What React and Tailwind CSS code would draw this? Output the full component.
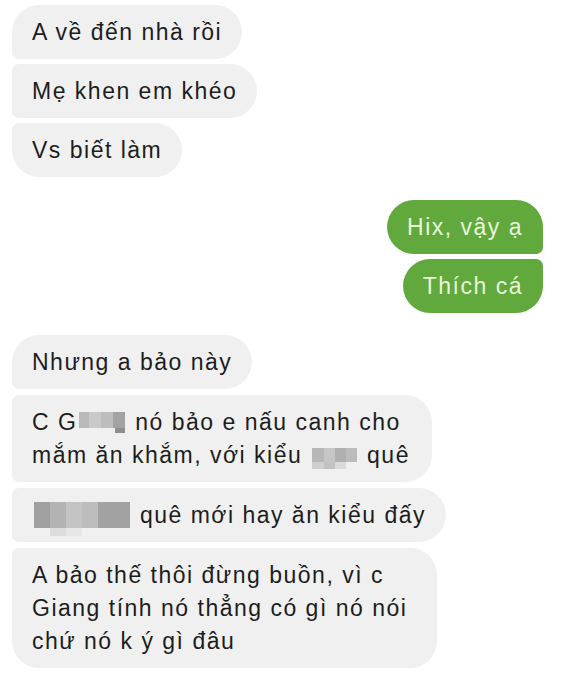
const font = { fontFamily: '"Liberation Sans", Arial, sans-serif' };

// pixelated censor block; each row: [height, [[width, colour], ...]]
function Blur({ rows, shift = 0 }) {
    return (
        <span className="inline-flex flex-col align-middle my-[-12px] mx-[2px]" style={{ position: 'relative', top: shift }}>
            {rows.map(([h, cells], i) => (
                <span key={i} className="flex">
                    {cells.map(([w, c], j) => (
                        <span key={j} className="inline-block" style={{ width: w, height: h, background: c }} />
                    ))}
                </span>
            ))}
        </span>
    );
}

function Left({ children, pos, className = 'pr-5' }) {
    const corners = {
        first: 'rounded-[27px] rounded-bl-[7px]',
        middle: 'rounded-[27px] rounded-tl-[7px] rounded-bl-[7px]',
        last: 'rounded-[27px] rounded-tl-[7px]',
    }[pos];
    return (
        <div className={`self-start bg-[#f0f0f0] text-[#1d1d1d] pl-5 py-[10.5px] whitespace-nowrap ${corners} ${className}`}>
            {children}
        </div>
    );
}

function Right({ children, pos }) {
    const corners = pos === 'first'
        ? 'rounded-[27px] rounded-br-[7px]'
        : 'rounded-[27px] rounded-tr-[7px]';
    return (
        <div className={`self-end mr-[20px] bg-[#61a83d] text-[#e8f6da] px-5 py-[10.5px] whitespace-nowrap ${corners}`}>
            {children}
        </div>
    );
}

export default function App() {
    return (
        <div className="w-[563px] h-[678px] bg-white overflow-hidden pl-3 pt-[5px] text-[23px] leading-[33px] tracking-[1.5px]" style={font}>
            <div className="flex flex-col gap-[5px]">
                <Left pos="first">A về đến nhà rồi</Left>
                <Left pos="middle">Mẹ khen em khéo</Left>
                <Left pos="last">Vs biết làm</Left>
            </div>

            <div className="flex flex-col gap-[5px] mt-[23px]">
                <Right pos="first">Hix, vậy ạ</Right>
                <Right pos="last">Thích cá</Right>
            </div>

            <div className="flex flex-col gap-[6px] mt-[22px]">
                <Left pos="first">Nhưng a bảo này</Left>
                <Left pos="middle" className="pr-[22px]">
                    C G<Blur shift={-1} rows={[
                        [16, [[10, '#b9b9b9'], [12, '#c9c9c9'], [12, '#bdbdbd'], [12, '#a3a3a3']]],
                        [5, [[36, 'transparent'], [10, '#8f8f8f']]],
                    ]} /> nó bảo e nấu canh cho<br />
                    mắm ăn khắm, với kiểu <Blur shift={2} rows={[
                        [14, [[12, '#b7b7b7'], [11, '#c6c6c6'], [11, '#b0b0b0'], [11, '#bcbcbc']]],
                        [7, [[12, '#cfcfcf'], [11, '#c2c2c2'], [11, '#dadada'], [11, 'transparent']]],
                    ]} /> quê
                </Left>
                <Left pos="middle">
                    <Blur shift={3} rows={[
                        [26, [[16, '#a0a0a0'], [16, '#b3b3b3'], [16, '#c4c4c4'], [16, '#bdbdbd'], [32, '#a2a2a2']]],
                        [8, [[16, 'transparent'], [16, '#dcdcdc'], [16, '#e6e6e6']]],
                    ]} /> quê mới hay ăn kiểu đấy
                </Left>
                <Left pos="last" className="pr-[30px]">
                    A bảo thế thôi đừng buồn, vì c<br />
                    Giang tính nó thẳng có gì nó nói<br />
                    chứ nó k ý gì đâu
                </Left>
            </div>
        </div>
    );
}
